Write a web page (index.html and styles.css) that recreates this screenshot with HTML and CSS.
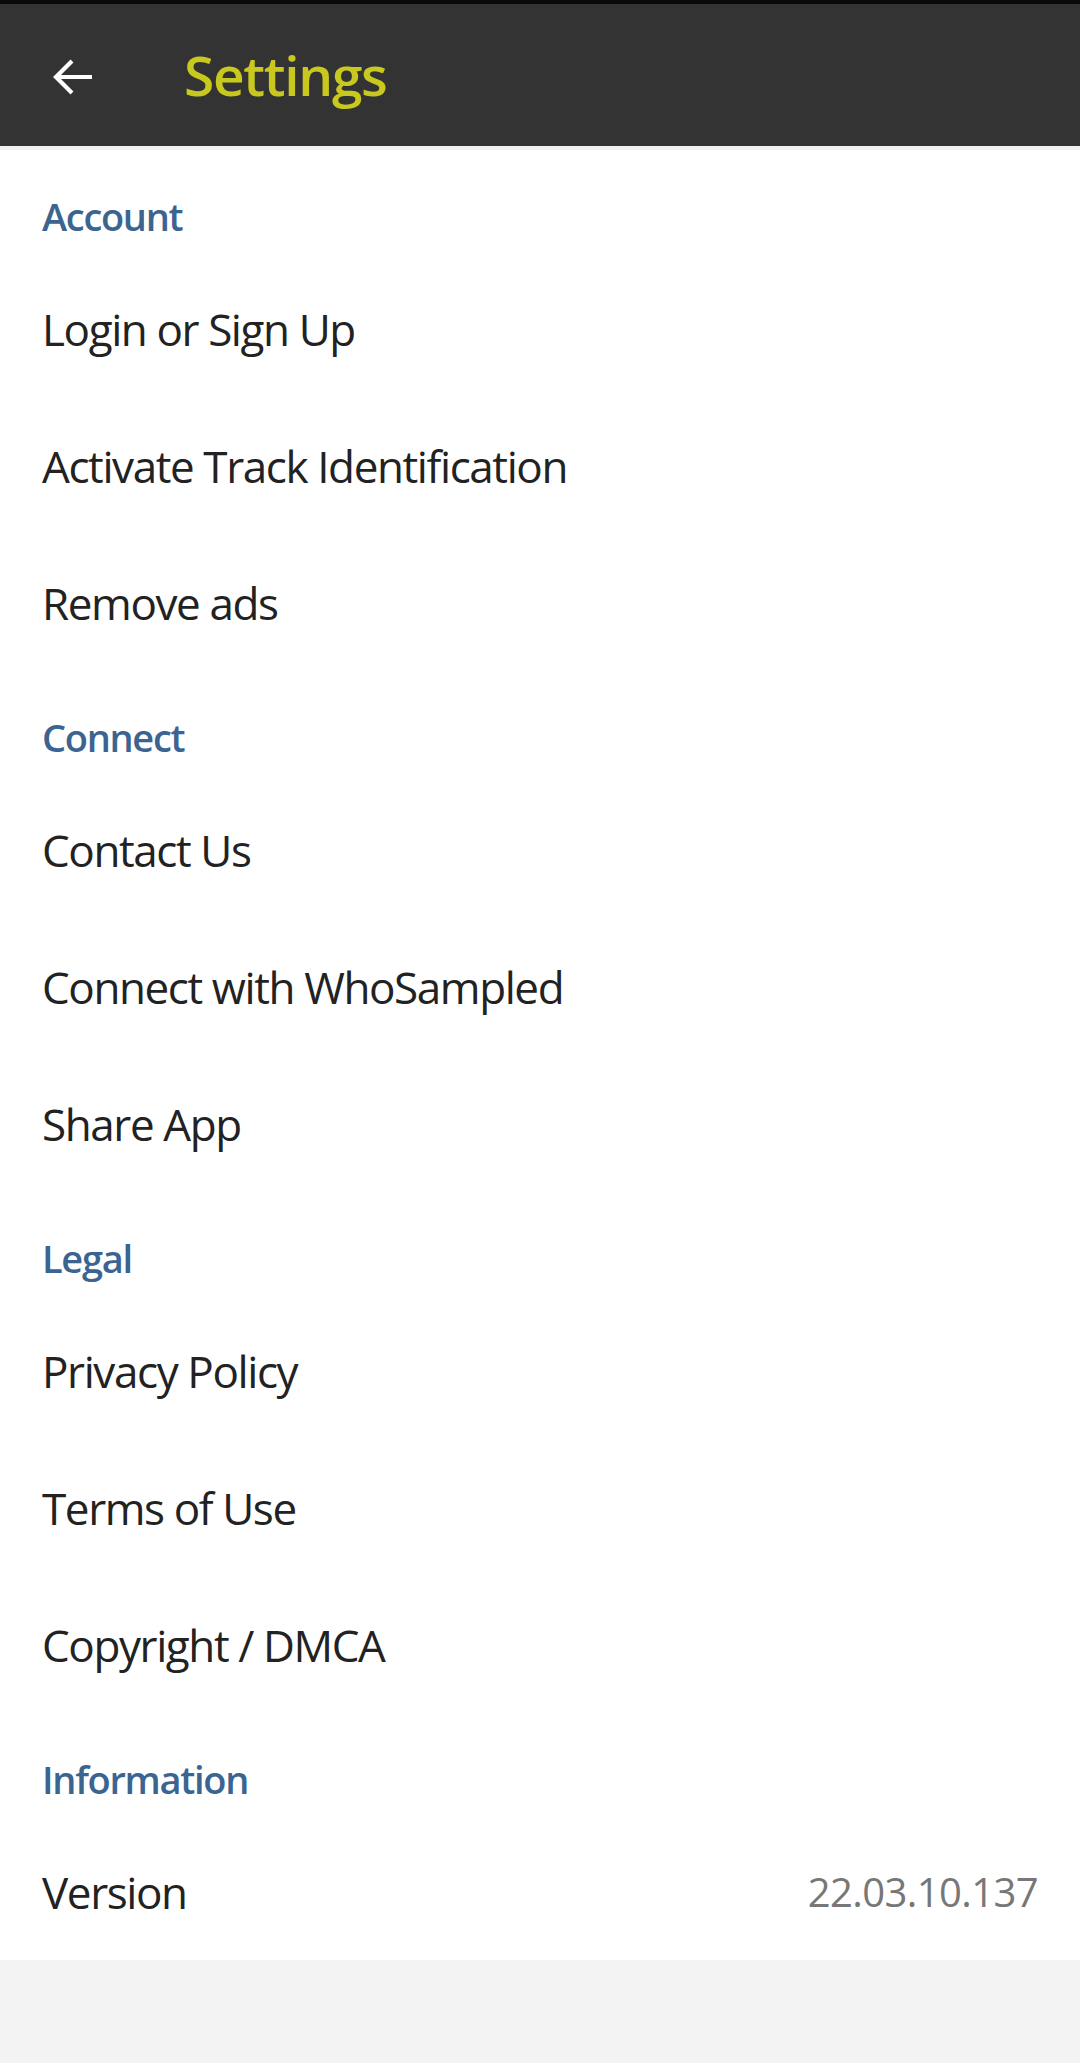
FILE: index.html
```html
<!DOCTYPE html>
<html lang="en">

<head>
    <meta charset="UTF-8">
    <meta name="viewport" content="width=device-width, initial-scale=1.0">
    <title>Settings</title>
    <link rel="stylesheet" href="styles.css">
</head>

<body>
    <div id="statusStrip"></div>
    <header id="toolbar">
        <button class="backBtn" aria-label="Back">
            <svg width="44" height="44" viewBox="0 0 44 44">
                <path d="M42 22H6M22 6L6 22l16 16" fill="none" stroke="#fff" stroke-width="4.2" />
            </svg>
        </button>
        <h1 class="title">Settings</h1>
    </header>
    <div id="toolbarEdge"></div>

    <main id="settings">
        <p class="sectionTitle">Account</p>
        <div class="row">Login or Sign Up</div>
        <div class="row">Activate Track Identification</div>
        <div class="row">Remove ads</div>

        <p class="sectionTitle">Connect</p>
        <div class="row">Contact Us</div>
        <div class="row">Connect with WhoSampled</div>
        <div class="row">Share App</div>

        <p class="sectionTitle">Legal</p>
        <div class="row">Privacy Policy</div>
        <div class="row">Terms of Use</div>
        <div class="row">Copyright / DMCA</div>

        <p class="sectionTitle">Information</p>
        <div class="row">
            <span>Version</span>
            <span class="version">22.03.10.137</span>
        </div>
    </main>
</body>

</html>
```

FILE: styles.css
```css
html,
body {
    background-color: #f3f3f3;
    height: 100%;
}

* {
    margin: 0;
    padding: 0;
    box-sizing: border-box;
}

body {
    font-family: "Open Sans", "Noto Sans", sans-serif;
}

#statusStrip {
    height: 4px;
    background: #0a0a0a;
}

#toolbar {
    height: 142px;
    background: #333333;
    display: flex;
    align-items: center;
}

#toolbarEdge {
    height: 4px;
    background: #f1f1f1;
}

.backBtn {
    width: 144px;
    height: 100%;
    border: 0;
    outline: 0;
    background: none;
    display: flex;
    align-items: center;
    padding-left: 50px;
    padding-top: 4px;
    cursor: pointer;
}

.title {
    color: #c8c81e;
    font-size: 55px;
    font-weight: 600;
    letter-spacing: -1.3px;
    line-height: 1;
    padding-left: 40px;
    padding-bottom: 2px;
}

#settings {
    background: #fff;
}

.sectionTitle {
    color: #3b6590;
    font-size: 38px;
    font-weight: 600;
    letter-spacing: -1.3px;
    line-height: 56px;
    padding: 38px 42px 16px;
}

.row {
    height: 137px;
    padding: 0 42px;
    display: flex;
    align-items: center;
    justify-content: space-between;
    color: #222;
    font-size: 44px;
    letter-spacing: -1.4px;
}

.version {
    color: #777;
    font-size: 40px;
    letter-spacing: -0.6px;
}
```
